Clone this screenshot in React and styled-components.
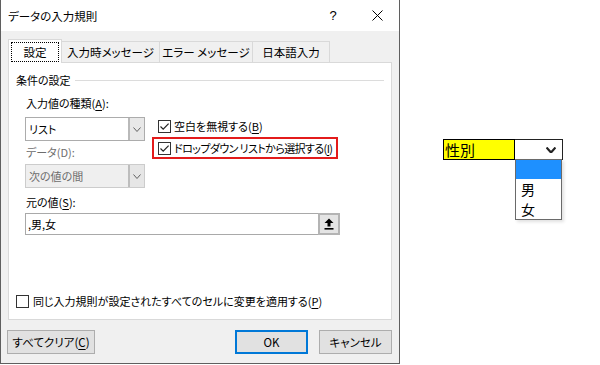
import React from "react";
import styled, { createGlobalStyle } from "styled-components";

const GlobalStyle = createGlobalStyle`
  html, body { margin: 0; padding: 0; background: #fff; }
  body {
    font-family: "Noto Sans CJK JP", "Noto Sans", sans-serif;
    font-size: 11px;
    color: #000;
    font-feature-settings: "palt";
  }
  u { text-underline-offset: 2px; }
`;

const Page = styled.div`
  display: flex;
  align-items: flex-start;
  width: 600px;
  height: 365px;
  overflow: hidden;
`;

const Dialog = styled.div`
  width: 400px;
  height: 364px;
  box-sizing: border-box;
  border: 1px solid #5f5f5f;
  border-top: none;
  display: flex;
  flex-direction: column;
  flex-shrink: 0;
`;

const TitleBar = styled.div`
  height: 31px;
  display: flex;
  align-items: center;
  background: #fff;
  padding-left: 7px;
  font-size: 11.5px;
  line-height: 16px;
`;

const Title = styled.span`
  flex: 1;
`;

const TitleButton = styled.span`
  width: ${(p) => p.w}px;
  height: 31px;
  display: flex;
  align-items: center;
  justify-content: center;
  font-size: 13px;
  font-family: "Liberation Sans", sans-serif;
`;

const Body = styled.div`
  flex: 1;
  background: #f0f0f0;
  padding: 8px 7px 0 7px;
  display: flex;
  flex-direction: column;
`;

const TabRow = styled.div`
  display: flex;
  align-items: flex-end;
  position: relative;
  z-index: 1;
`;

const Tab = styled.div`
  width: ${(p) => p.w}px;
  height: ${(p) => (p.active ? 24 : 21)}px;
  margin-bottom: ${(p) => (p.active ? -1 : 0)}px;
  box-sizing: border-box;
  border: 1px solid #d9d9d9;
  border-bottom: none;
  border-left: ${(p) => (p.first || p.active ? "1px solid #d9d9d9" : "none")};
  background: ${(p) => (p.active ? "#fff" : "#f0f0f0")};
  display: flex;
  align-items: ${(p) => (p.active ? "stretch" : "center")};
  justify-content: center;
  padding: ${(p) => (p.active ? "2px 2px 1px" : "0")};
  line-height: 16px;
  font-size: 11.5px;
`;

const FocusRing = styled.span`
  flex: 1;
  border: 1px dotted #000;
  display: flex;
  align-items: center;
  justify-content: center;
`;

const Panel = styled.div`
  height: 258px;
  box-sizing: border-box;
  background: #fff;
  border: 1px solid #d9d9d9;
  padding: 9px 7px 10px 7px;
  display: flex;
  flex-direction: column;
  line-height: 16px;
`;

const GroupHead = styled.div`
  display: flex;
  align-items: center;
  gap: 4px;
`;

const Rule = styled.div`
  flex: 1;
  height: 1px;
  background: #dcdcdc;
  margin-top: 1px;
`;

const Indent = styled.div`
  padding-left: 9px;
  display: flex;
  flex-direction: column;
`;

const TopArea = styled.div`
  display: flex;
  align-items: flex-start;
`;

const Column = styled.div`
  width: 120px;
  display: flex;
  flex-direction: column;
`;

const FieldLabel = styled.div`
  margin-top: ${(p) => p.top}px;
  padding-left: 1px;
  color: ${(p) => (p.disabled ? "#6d6d6d" : "#000")};
  height: 16px;
`;

const Combo = styled.div`
  margin-top: ${(p) => p.top}px;
  height: 24px;
  box-sizing: border-box;
  border: 1px solid ${(p) => (p.disabled ? "#cccccc" : "#acacac")};
  background: ${(p) => (p.disabled ? "#efefef" : "#fff")};
  color: ${(p) => (p.disabled ? "#6d6d6d" : "#000")};
  display: flex;
  align-items: center;
  padding-left: 3px;
`;

const ComboText = styled.span`
  flex: 1;
`;

const ComboArrow = styled.span`
  width: 16px;
  align-self: stretch;
  box-sizing: border-box;
  border-left: 2px solid ${(p) => (p.disabled ? "#bdbdbd" : "#b9b9b9")};
  background: ${(p) => (p.disabled ? "#e6e6e6" : "#e8e8e8")};
  display: flex;
  align-items: center;
  justify-content: center;
`;

const Options = styled.div`
  margin-left: 7px;
  margin-top: 27px;
  display: flex;
  flex-direction: column;
`;

const OptionRow = styled.label`
  height: 22px;
  width: fit-content;
  box-sizing: border-box;
  border: 2px solid ${(p) => (p.marked ? "#e31b1b" : "transparent")};
  padding: 0 4px 0 4px;
  display: flex;
  align-items: center;
  gap: 3px;
  letter-spacing: ${(p) => (p.tight ? "-0.6px" : "0")};
`;

const Box = styled.span`
  width: 13px;
  height: 13px;
  box-sizing: border-box;
  border: 1px solid #333;
  background: #fff;
  display: inline-flex;
  align-items: center;
  justify-content: center;
  flex-shrink: 0;
`;

const SourceBox = styled.div`
  margin-top: 3px;
  width: 315px;
  height: 22px;
  box-sizing: border-box;
  border: 1px solid #a9a9a9;
  background: #fff;
  display: flex;
  align-items: center;
  padding-left: 2px;
`;

const SourceText = styled.span`
  flex: 1;
`;

const RangeButton = styled.span`
  width: 22px;
  height: 22px;
  margin: -1px -1px -1px 0;
  box-sizing: border-box;
  border: 2px solid #b4b4b4;
  background: #e4e4e4;
  display: flex;
  align-items: center;
  justify-content: center;
`;

const Spacer = styled.div`
  flex: 1;
`;

const CheckRow = styled.label`
  display: flex;
  align-items: center;
  gap: 4px;
  height: 16px;
`;

const Footer = styled.div`
  margin-top: 10px;
  display: flex;
  gap: 11px;
`;

const Button = styled.button`
  width: ${(p) => p.w}px;
  height: 24px;
  box-sizing: border-box;
  margin-left: ${(p) => p.ml || 0};
  border: ${(p) => (p.primary ? "2px solid #0078d7" : "1px solid #adadad")};
  background: #e1e1e1;
  font: inherit;
  font-size: 11.5px;
  color: #000;
  padding: 0;
  display: flex;
  align-items: center;
  justify-content: center;
`;

const SheetArea = styled.div`
  margin-left: 43px;
  margin-top: 139px;
  position: relative;
  display: flex;
`;

const Cell = styled.div`
  width: 72px;
  height: 21px;
  box-sizing: border-box;
  border: 1px solid #000;
  background: #ffff00;
  font-size: 15px;
  line-height: 19px;
  padding-left: 1px;
  font-feature-settings: normal;
`;

const DropButton = styled.div`
  width: 48px;
  height: 21px;
  box-sizing: border-box;
  border: 1px solid #222;
  border-left: none;
  background: #fff;
  display: flex;
  align-items: center;
  justify-content: flex-end;
  padding-right: 6px;
`;

const DropList = styled.div`
  position: absolute;
  left: 72px;
  top: 20px;
  width: 47px;
  box-sizing: border-box;
  border: 1px solid #6a6a6a;
  background: #fff;
  box-shadow: 2px 2px 3px rgba(0, 0, 0, 0.12);
  font-size: 14px;
  font-feature-settings: normal;
`;

const DropItem = styled.div`
  height: ${(p) => (p.selected ? 19 : 20)}px;
  line-height: 20px;
  padding-left: 5px;
  background: ${(p) => (p.selected ? "#1e90ff" : "#fff")};
`;

const Check = () => (
  <svg width="11" height="11" viewBox="0 0 11 11">
    <path d="M1.5 5.5 L4.2 8.2 L9.6 2.6" fill="none" stroke="#222" strokeWidth="1.2" />
  </svg>
);

const Chevron = ({ color = "#606060", w = 8, h = 5, sw = 1 }) => (
  <svg width={w} height={h} viewBox={`0 0 ${w} ${h}`}>
    <path d={`M0.5 0.5 L${w / 2} ${h - 0.5} L${w - 0.5} 0.5`} fill="none" stroke={color} strokeWidth={sw} />
  </svg>
);

const CheckItem = ({ marked, checked, tight, children }) => (
  <OptionRow marked={marked} tight={tight}>
    <Box>{checked && <Check />}</Box>
    <span>{children}</span>
  </OptionRow>
);

export default function App() {
  return (
    <Page>
      <GlobalStyle />
      <Dialog>
        <TitleBar>
          <Title>データの入力規則</Title>
          <TitleButton w={46}>?</TitleButton>
          <TitleButton w={43}>
            <svg width="11" height="11" viewBox="0 0 11 11">
              <path d="M0.5 0.5 L10.5 10.5 M10.5 0.5 L0.5 10.5" stroke="#000" strokeWidth="1" />
            </svg>
          </TitleButton>
        </TitleBar>
        <Body>
          <TabRow>
            <Tab active first w={54}>
              <FocusRing>設定</FocusRing>
            </Tab>
            <Tab w={98}>入力時メッセージ</Tab>
            <Tab w={93}>エラー メッセージ</Tab>
            <Tab w={77}>日本語入力</Tab>
          </TabRow>
          <Panel>
            <GroupHead>
              <span>条件の設定</span>
              <Rule />
            </GroupHead>
            <Indent>
              <TopArea>
                <Column>
                  <FieldLabel top={7}>
                    入力値の種類(<u>A</u>):
                  </FieldLabel>
                  <Combo top={6}>
                    <ComboText>リスト</ComboText>
                    <ComboArrow>
                      <Chevron />
                    </ComboArrow>
                  </Combo>
                  <FieldLabel top={3} disabled>
                    データ(D):
                  </FieldLabel>
                  <Combo top={4} disabled>
                    <ComboText>次の値の間</ComboText>
                    <ComboArrow disabled>
                      <Chevron />
                    </ComboArrow>
                  </Combo>
                </Column>
                <Options>
                  <CheckItem checked>
                    空白を無視する(<u>B</u>)
                  </CheckItem>
                  <CheckItem checked marked tight>
                    ドロップダウン リストから選択する(<u>I</u>)
                  </CheckItem>
                </Options>
              </TopArea>
              <FieldLabel top={6}>
                元の値(<u>S</u>):
              </FieldLabel>
              <SourceBox>
                <SourceText>,男,女</SourceText>
                <RangeButton>
                  <svg width="10" height="12" viewBox="0 0 10 12">
                    <path d="M5 0.5 L9.5 5 L6.5 5 L6.5 8.5 L3.5 8.5 L3.5 5 L0.5 5 Z" fill="#000" />
                    <rect x="0.5" y="10" width="9" height="1.6" fill="#000" />
                  </svg>
                </RangeButton>
              </SourceBox>
            </Indent>
            <Spacer />
            <CheckRow>
              <Box />
              <span>
                同じ入力規則が設定されたすべてのセルに変更を適用する(<u>P</u>)
              </span>
            </CheckRow>
          </Panel>
          <Footer>
            <Button w={88} ml="-1px">
              すべてクリア(<u>C</u>)
            </Button>
            <Button w={73} ml="auto" primary>
              OK
            </Button>
            <Button w={73}>キャンセル</Button>
          </Footer>
        </Body>
      </Dialog>
      <SheetArea>
        <Cell>性別</Cell>
        <DropButton>
          <Chevron color="#222" w={10} h={6} sw={2.2} />
        </DropButton>
        <DropList>
          <DropItem selected />
          <DropItem>男</DropItem>
          <DropItem>女</DropItem>
        </DropList>
      </SheetArea>
    </Page>
  );
}
